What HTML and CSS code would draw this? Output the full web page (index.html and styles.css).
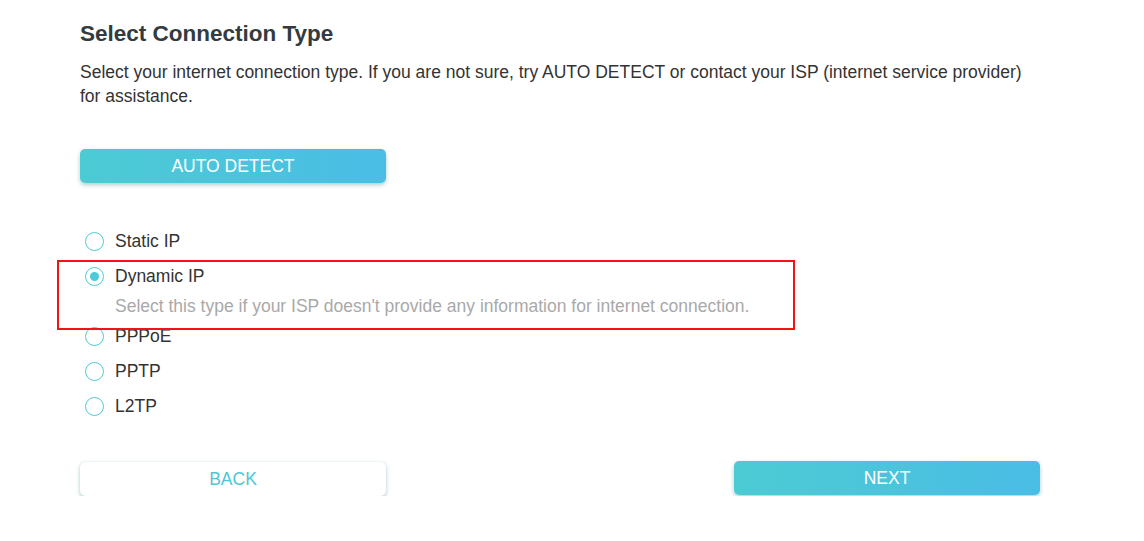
FILE: index.html
```html
<!DOCTYPE html>
<html>
<head>
<meta charset="utf-8">
<link rel="stylesheet" href="styles.css">
</head>
<body>
<div class="page">
  <h1 class="title">Select Connection Type</h1>
  <p class="desc">Select your internet connection type. If you are not sure, try AUTO DETECT or contact your ISP (internet service provider) for assistance.</p>
  <button class="btn btn-primary btn-auto">AUTO DETECT</button>
  <div class="options">
    <div class="option"><span class="radio"></span><span class="label">Static IP</span></div>
    <div class="option-group">
      <div class="option"><span class="radio checked"></span><span class="label">Dynamic IP</span></div>
      <div class="hint">Select this type if your ISP doesn't provide any information for internet connection.</div>
      <div class="highlight"></div>
    </div>
    <div class="option"><span class="radio"></span><span class="label">PPPoE</span></div>
    <div class="option"><span class="radio"></span><span class="label">PPTP</span></div>
    <div class="option"><span class="radio"></span><span class="label">L2TP</span></div>
  </div>
  <div class="actions">
    <button class="btn btn-secondary">BACK</button>
    <button class="btn btn-primary btn-next">NEXT</button>
  </div>
</div>
</body>
</html>
```

FILE: styles.css
```css
html, body {
  margin: 0;
  padding: 0;
  background: #ffffff;
}
body {
  font-family: "Liberation Sans", Arial, sans-serif;
  color: #333333;
}
.page {
  width: 960px;
  padding: 20px 0 0 80px;
}
.title {
  margin: 0;
  font-size: 22.5px;
  line-height: 28px;
  font-weight: bold;
  color: #333b40;
}
.desc {
  margin: 12px 0 0;
  font-size: 17.5px;
  line-height: 24px;
  color: #333333;
}
.btn {
  display: block;
  width: 306px;
  height: 34px;
  border: none;
  border-radius: 5px;
  font-family: "Liberation Sans", Arial, sans-serif;
  font-size: 17.5px;
  padding: 0;
  cursor: pointer;
}
.btn-primary {
  background: linear-gradient(90deg, #4ccbd3 0%, #4abde6 100%);
  color: #ffffff;
  box-shadow: 0 2px 4px rgba(40, 110, 130, 0.35);
}
.btn-secondary {
  background: #ffffff;
  color: #4dc7d8;
  box-shadow: 0 0 1px rgba(120, 190, 200, 0.5), 0 2px 4px rgba(40, 120, 140, 0.35);
}
.btn-auto {
  margin-top: 41px;
}
.options {
  margin-top: 41px;
  display: flex;
  flex-direction: column;
}
.option {
  height: 35px;
  display: flex;
  align-items: center;
  gap: 11px;
  padding-left: 5px;
}
.radio {
  box-sizing: border-box;
  width: 19px;
  height: 19px;
  border: 1.5px solid #4ccad6;
  border-radius: 50%;
  display: flex;
  align-items: center;
  justify-content: center;
  flex: none;
}
.radio.checked::after {
  content: "";
  width: 9px;
  height: 9px;
  border-radius: 50%;
  background: #4ccad6;
}
.label {
  font-size: 17.5px;
  color: #333333;
}
.option-group {
  position: relative;
}
.hint {
  padding-left: 35px;
  font-size: 17.5px;
  line-height: 25px;
  color: #a9a9a9;
}
.highlight {
  position: absolute;
  left: -23px;
  top: 1px;
  width: 734px;
  height: 66px;
  border: 2.5px solid #f21414;
  pointer-events: none;
}
.actions {
  margin-top: 38px;
  display: flex;
  justify-content: space-between;
  align-items: flex-start;
}
.btn-next {
  margin-top: -1px;
}
```
